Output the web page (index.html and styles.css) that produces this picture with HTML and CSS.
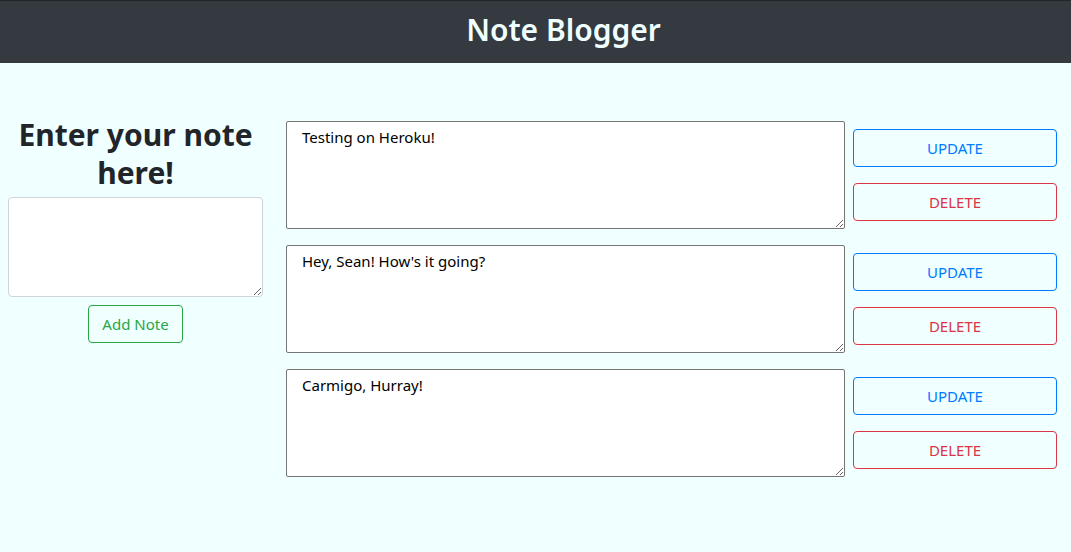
FILE: index.html
```html
<!DOCTYPE html>
<html lang="en">
<head>
<meta charset="utf-8">
<title>Note Blogger</title>
<link rel="stylesheet" href="styles.css">
</head>
<body>
<header class="topbar">
  <h1 class="brand">Note Blogger</h1>
</header>
<main class="layout">
  <section class="composer">
    <h2 class="composer-title">Enter your note here!</h2>
    <textarea class="composer-input"></textarea>
    <button class="btn btn-green">Add Note</button>
  </section>
  <section class="notes">
    <div class="note">
      <textarea class="note-text">Testing on Heroku!</textarea>
      <div class="note-actions">
        <button class="btn btn-blue btn-wide">UPDATE</button>
        <button class="btn btn-red btn-wide">DELETE</button>
      </div>
    </div>
    <div class="note">
      <textarea class="note-text">Hey, Sean! How's it going?</textarea>
      <div class="note-actions">
        <button class="btn btn-blue btn-wide">UPDATE</button>
        <button class="btn btn-red btn-wide">DELETE</button>
      </div>
    </div>
    <div class="note">
      <textarea class="note-text">Carmigo, Hurray!</textarea>
      <div class="note-actions">
        <button class="btn btn-blue btn-wide">UPDATE</button>
        <button class="btn btn-red btn-wide">DELETE</button>
      </div>
    </div>
  </section>
</main>
</body>
</html>
```
FILE: styles.css
```css
* { box-sizing: border-box; }
html, body {
  margin: 0;
  padding: 0;
  background: #f0ffff;
  font-family: "Noto Sans", "Open Sans", sans-serif;
  color: #212529;
}
.topbar {
  height: 63px;
  background: #343a40;
  border-top: 1px solid #212529;
  display: flex;
  align-items: center;
  justify-content: center;
  padding-left: 56px;
  padding-bottom: 5px;
}
.brand {
  margin: 0;
  color: #f0ffff;
  font-size: 30px;
  font-weight: 600;
  line-height: 1.2;
}
.layout {
  display: flex;
  align-items: flex-start;
  padding: 53px 14px 0 8px;
  gap: 23px;
}
.composer {
  width: 255px;
  flex: none;
  display: flex;
  flex-direction: column;
  align-items: center;
}
.composer-title {
  margin: 0 0 5px;
  font-size: 30px;
  font-weight: 700;
  line-height: 38px;
  text-align: center;
}
.composer-input {
  width: 255px;
  height: 100px;
  border: 1px solid #ced4da;
  border-radius: 4px;
  background: #fff;
  margin: 0 0 8px;
  resize: vertical;
}
.notes {
  flex: 1;
  display: flex;
  flex-direction: column;
  gap: 16px;
  padding-top: 5px;
}
.note {
  display: flex;
  gap: 8px;
  align-items: flex-start;
}
.note-text {
  width: 559px;
  height: 108px;
  border: 1px solid #767676;
  border-radius: 2px;
  background: #fff;
  padding: 3px 15px;
  font-family: "Noto Sans", "Open Sans", sans-serif;
  font-size: 15px;
  line-height: 24px;
  color: #000;
  margin: 0;
}
.note-actions {
  flex: 1;
  display: flex;
  flex-direction: column;
  gap: 16px;
  padding-top: 8px;
}
.btn {
  font-family: "Noto Sans", "Open Sans", sans-serif;
  font-size: 15px;
  line-height: 24px;
  height: 38px;
  padding: 6px 8px;
  background: transparent;
  border: 1px solid;
  border-radius: 4px;
  white-space: nowrap;
}
.btn-green { color: #28a745; border-color: #28a745; width: 95px; }
.btn-blue { color: #007bff; border-color: #007bff; }
.btn-red { color: #dc3545; border-color: #dc3545; }
.btn-wide { width: 204px; }
```
